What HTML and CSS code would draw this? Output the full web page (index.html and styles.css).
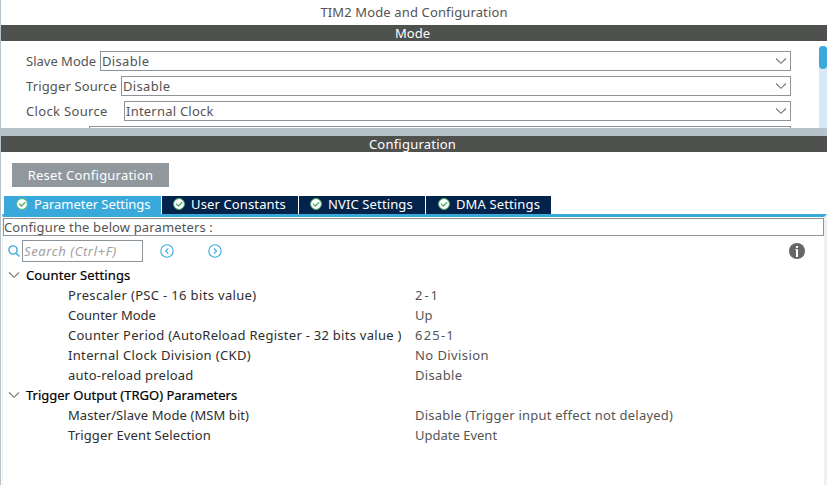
FILE: index.html
```html
<!DOCTYPE html>
<html lang="en">
<head>
<meta charset="utf-8">
<title>TIM2 Mode and Configuration</title>
<link rel="stylesheet" href="styles.css">
</head>
<body>
<svg class="defs" aria-hidden="true">
  <symbol id="chev" viewBox="0 0 12 8"><path d="M1 1.5 6 6.3 11 1.5" fill="none" stroke="currentColor" stroke-width="1.1"/></symbol>
  <symbol id="ok" viewBox="0 0 12 12"><circle cx="6" cy="6" r="5.4" fill="#fff" stroke="#5bb878" stroke-width="1"/><path d="M3 5.6 5.4 8 9.2 4.2" fill="none" stroke="#4dac6b" stroke-width="1.3"/></symbol>
</svg>
<div class="app">
  <header class="title s1">TIM2 Mode and Configuration</header>
  <h2 class="bar">Mode</h2>
  <section class="mode">
    <div class="fields">
      <div class="field"><label>Slave Mode</label><div class="select s3">Disable<svg class="arrow"><use href="#chev"/></svg></div></div>
      <div class="field trigger"><label class="s1">Trigger Source</label><div class="select s3">Disable<svg class="arrow"><use href="#chev"/></svg></div></div>
      <div class="field clock"><label class="s3">Clock Source</label><div class="select s2">Internal Clock<svg class="arrow"><use href="#chev"/></svg></div></div>
      <div class="field next"><div class="select"></div></div>
    </div>
    <div class="scroll"><div class="thumb"></div></div>
  </section>
  <div class="splitter"></div>
  <h2 class="bar s2">Configuration</h2>
  <section class="config">
    <button class="reset s2">Reset Configuration</button>
    <nav class="tabs">
      <div class="tab active"><svg class="ok"><use href="#ok"/></svg>Parameter Settings</div>
      <div class="tab user s1"><svg class="ok"><use href="#ok"/></svg>User Constants</div>
      <div class="tab nvic s1"><svg class="ok"><use href="#ok"/></svg>NVIC Settings</div>
      <div class="tab dma s1"><svg class="ok"><use href="#ok"/></svg>DMA Settings</div>
    </nav>
    <div class="pane">
      <div class="hint s1">Configure the below parameters :</div>
      <div class="tools">
        <svg class="glass" viewBox="0 0 12 12"><circle cx="5" cy="5" r="4.1"/><path d="M7.9 7.9 11.5 11.5"/></svg>
        <div class="search">Search (Ctrl+F)</div>
        <svg class="nav prev" viewBox="0 0 14 14"><circle cx="7" cy="7" r="6.2"/><path d="M8.3 4.4 5.7 7 8.3 9.6"/></svg>
        <svg class="nav" viewBox="0 0 14 14"><circle cx="7" cy="7" r="6.2"/><path d="M5.9 4.4 8.5 7 5.9 9.6"/></svg>
        <svg class="info" viewBox="0 0 16 16"><circle cx="8" cy="8" r="8" fill="#666"/><path d="M7 3h2v2H7zM6.2 6.2H9V14H7V7H6.2z" fill="#fff"/></svg>
      </div>
      <div class="tree">
        <div class="group s1"><svg class="arrow"><use href="#chev"/></svg>Counter Settings</div>
        <div class="row"><span class="s3">Prescaler (PSC - 16 bits value)</span><span class="wide">2-1</span></div>
        <div class="row"><span>Counter Mode</span><span>Up</span></div>
        <div class="row"><span class="s25">Counter Period (AutoReload Register - 32 bits value )</span><span class="digits">625-1</span></div>
        <div class="row"><span class="s3">Internal Clock Division (CKD)</span><span class="s4">No Division</span></div>
        <div class="row"><span class="s2">auto-reload preload</span><span class="s3">Disable</span></div>
        <div class="group"><svg class="arrow"><use href="#chev"/></svg>Trigger Output (TRGO) Parameters</div>
        <div class="row"><span class="s0">Master/Slave Mode (MSM bit)</span><span class="s2">Disable (Trigger input effect not delayed)</span></div>
        <div class="row"><span class="s1">Trigger Event Selection</span><span>Update Event</span></div>
      </div>
    </div>
  </section>
</div>
</body>
</html>
```

FILE: styles.css
```css
* { box-sizing: border-box; }
body { margin: 0; background: #fff; }
.defs { display: none; }
.app {
  height: 485px;
  overflow: hidden;
  display: flex;
  flex-direction: column;
  border-left: 1px solid #b7c3ca;
  font: 13px/20px "Noto Sans", sans-serif;
  color: #545454;
  white-space: nowrap;
}
.s0 { letter-spacing: .08px; }
.s1 { letter-spacing: .13px; }
.s2 { letter-spacing: .22px; }
.s25 { letter-spacing: .27px; }
.s3 { letter-spacing: .34px; }
.s4 { letter-spacing: .42px; }
.digits { letter-spacing: 1.2px; }
.wide { letter-spacing: 2px; }
.title { height: 25px; line-height: 24px; text-align: center; }
.bar {
  flex: none;
  height: 16px;
  margin: 0;
  padding-right: 3px;
  background: #4f514f;
  color: #fff;
  font-size: 13px;
  font-weight: 400;
  line-height: 16px;
  text-align: center;
}
.mode { height: 87px; display: flex; justify-content: space-between; overflow: hidden; }
.fields { width: 790px; padding: 10px 0 0 25px; display: flex; flex-direction: column; gap: 5px; }
.field { flex: none; display: flex; height: 20px; }
.field label { width: 74px; }
.trigger label { width: 95px; }
.clock label { width: 98px; }
.next { padding-left: 63px; }
.select {
  flex: 1;
  display: flex;
  justify-content: space-between;
  align-items: center;
  border: 1px solid #8c9399;
  padding: 0 3px 0 1px;
  line-height: 18px;
}
.arrow { width: 12px; height: 8px; color: #777; }
.scroll { width: 8px; margin-top: 5px; background: #d9e8f5; }
.thumb { height: 23px; border-radius: 4px; background: #39a9dc; }
.splitter { flex: none; height: 8px; background: #b7c3ca; }
.config { flex: 1; display: flex; flex-direction: column; align-items: stretch; padding-top: 11px; }
.reset {
  width: 157px;
  height: 24px;
  margin: 0 0 9px 11px;
  padding: 0;
  border: 0;
  background: #90989e;
  color: #fff;
  font-family: inherit;
  font-size: 13px;
}
.tabs { display: flex; gap: 1px; height: 18px; margin-left: 3px; }
.tab {
  display: flex;
  align-items: center;
  gap: 6px;
  padding: 0 0 2px 11px;
  background: #03234b;
  color: #fff;
  line-height: 16px;
}
.active { width: 157px; padding-left: 12px; background: #39a9dc; letter-spacing: -.05px; }
.user { width: 136px; }
.nvic { width: 126px; }
.dma { width: 125px; padding-left: 12px; }
.ok { width: 12px; height: 12px; }
.pane {
  flex: 1;
  margin-left: 1px;
  border-left: 1px solid #f0f0f0;
  border-right: 3px solid #f0f0f0;
  border-top: 3px solid #39a9dc;
}
.hint { height: 18px; margin-top: 1px; border: 1px solid #8c9399; line-height: 17px; }
.tools { display: flex; align-items: center; height: 30px; padding: 0 19px 0 5px; }
.glass { width: 12px; height: 12px; margin-right: 2px; fill: none; stroke: #39a9dc; stroke-width: 1.4; }
.search {
  width: 121px;
  height: 22px;
  padding-left: 1px;
  border: 1px solid #8c9399;
  color: #a0a0a0;
  font-style: italic;
  letter-spacing: .6px;
  line-height: 20px;
}
.nav { width: 14px; height: 14px; fill: none; stroke: #39a9dc; stroke-width: 1.1; }
.prev { margin: 0 34px 0 17px; }
.info { width: 16px; height: 16px; margin-left: auto; }
.tree { margin-top: -1px; color: #555; }
.group { height: 20px; padding-left: 5px; display: flex; align-items: center; color: #000; -webkit-text-stroke: .2px #000; }
.group .arrow { margin-right: 6px; }
.row { display: grid; grid-template-columns: 347px 1fr; height: 20px; padding-left: 65px; }
.row span:first-child { color: #2e2e2e; }
```
